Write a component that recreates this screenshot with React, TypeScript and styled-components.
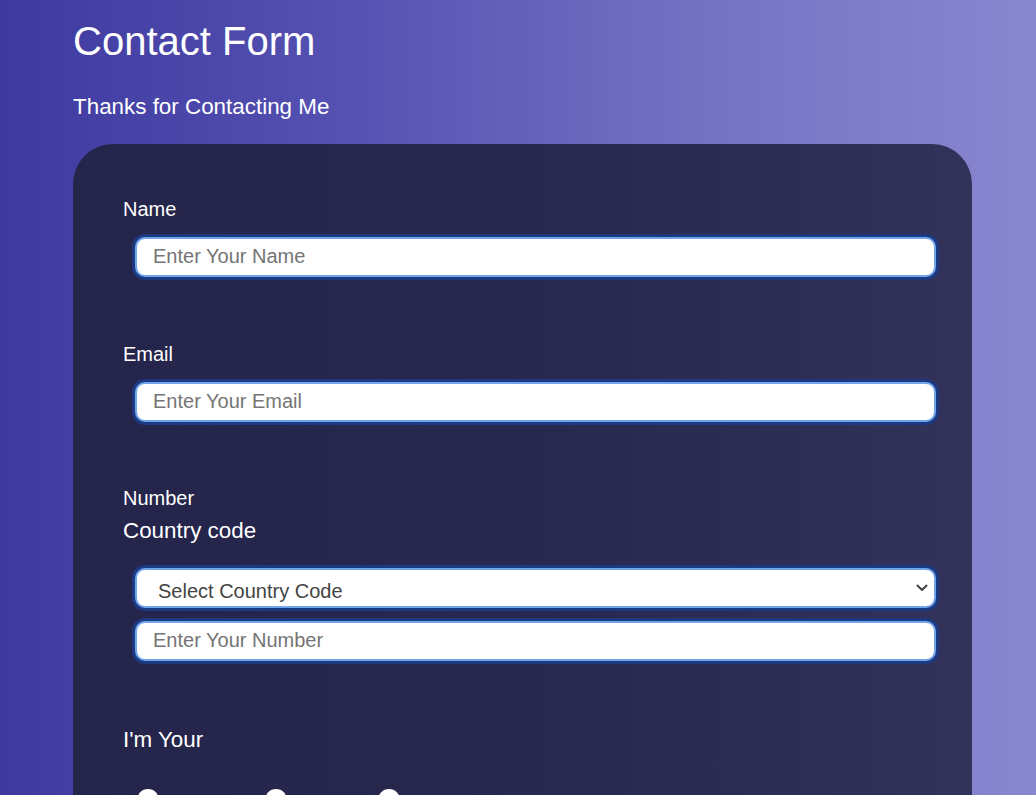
import React from "react";
import styled, { createGlobalStyle } from "styled-components";

const Global = createGlobalStyle`
  html, body { margin: 0; padding: 0; }
  body {
    min-height: 100vh;
    overflow: hidden;
    background: linear-gradient(to right, #3d399f 0%, #5753b3 35%, #7673c4 70%, #8987d0 100%);
    font-family: "Liberation Sans", Arial, sans-serif;
    color: #ffffff;
  }
`;

const Page = styled.main`
  padding: 18px 64px 60px 73px;
  display: flex;
  flex-direction: column;
`;

const Title = styled.h1`
  margin: 0;
  font-size: 40px;
  font-weight: 400;
  line-height: 46px;
`;

const Subtitle = styled.p`
  margin: 30px 0 0;
  font-size: 22.4px;
  line-height: 26px;
`;

const Card = styled.form`
  margin-top: 24px;
  width: 899px;
  box-sizing: border-box;
  padding: 54px 36px 80px 50px;
  border-radius: 40px;
  background: linear-gradient(to right, #25244b 0%, #28274d 50%, #32325a 100%);
  display: flex;
  flex-direction: column;
`;

const Field = styled.div<{ $gap?: number }>`
  display: flex;
  flex-direction: column;
  margin-top: ${(p) => p.$gap ?? 0}px;
`;

const Label = styled.label`
  font-size: 20px;
  line-height: 23px;
`;

const SubLabel = styled.span`
  margin-top: 8px;
  font-size: 22.4px;
  line-height: 26px;
`;

const controlStyles = `
  box-sizing: border-box;
  width: 801px;
  height: 40px;
  margin-left: 12px;
  border: 2px solid #72a5ea;
  border-radius: 10px;
  box-shadow: 0 0 0 3px #1c3a82;
  background: #ffffff;
  font-family: "Liberation Sans", Arial, sans-serif;
  font-size: 20px;
  outline: none;
`;

const Input = styled.input<{ $top?: number }>`
  ${controlStyles}
  margin-top: ${(p) => p.$top ?? 16}px;
  padding: 0 16px 2px;
  color: #333;
  &::placeholder { color: #757575; }
`;

const SelectWrap = styled.div`
  position: relative;
  margin-top: 24px;
  display: flex;
`;

const Select = styled.select`
  ${controlStyles}
  appearance: none;
  -webkit-appearance: none;
  padding: 6px 40px 0 21px;
  color: #444;
`;

const Chevron = styled.svg`
  position: absolute;
  left: 793px;
  top: 16px;
  width: 12px;
  height: 8px;
  pointer-events: none;
`;

const GroupTitle = styled.span`
  font-size: 22.4px;
  line-height: 26px;
`;

const RadioRow = styled.div`
  margin-top: 36px;
  margin-left: 14px;
  display: flex;
`;

const RadioOption = styled.div<{ $w: number }>`
  display: flex;
  align-items: flex-start;
  width: ${(p) => p.$w}px;
`;

const RadioDot = styled.input`
  appearance: none;
  -webkit-appearance: none;
  margin: 0;
  width: 22px;
  height: 22px;
  border-radius: 50%;
  background: #ffffff;
  border: none;
  flex: none;
`;

const options = [
  { label: "Friend", w: 128 },
  { label: "Client", w: 113 },
  { label: "Recruiter", w: 140 },
];

export default function App() {
  return (
    <>
      <Global />
      <Page>
        <Title>Contact Form</Title>
        <Subtitle>Thanks for Contacting Me</Subtitle>
        <Card onSubmit={(e) => e.preventDefault()}>
          <Field>
            <Label htmlFor="name">Name</Label>
            <Input id="name" type="text" placeholder="Enter Your Name" />
          </Field>
          <Field $gap={66}>
            <Label htmlFor="email">Email</Label>
            <Input id="email" type="email" placeholder="Enter Your Email" />
          </Field>
          <Field $gap={65}>
            <Label htmlFor="number">Number</Label>
            <SubLabel>Country code</SubLabel>
            <SelectWrap>
              <Select defaultValue="">
                <option value="">Select Country Code</option>
                <option value="+1">+1</option>
                <option value="+44">+44</option>
                <option value="+91">+91</option>
              </Select>
              <Chevron viewBox="0 0 12 8">
                <path d="M1.5 1.5 L6 6 L10.5 1.5" fill="none" stroke="#444" strokeWidth="2" strokeLinecap="round" strokeLinejoin="round" />
              </Chevron>
            </SelectWrap>
            <Input id="number" type="tel" $top={13} placeholder="Enter Your Number" />
          </Field>
          <Field $gap={66}>
            <GroupTitle>I'm Your</GroupTitle>
            <RadioRow>
              {options.map((o) => (
                <RadioOption key={o.label} $w={o.w}>
                  <RadioDot type="radio" name="who" aria-label={o.label} />
                </RadioOption>
              ))}
            </RadioRow>
          </Field>
        </Card>
      </Page>
    </>
  );
}
